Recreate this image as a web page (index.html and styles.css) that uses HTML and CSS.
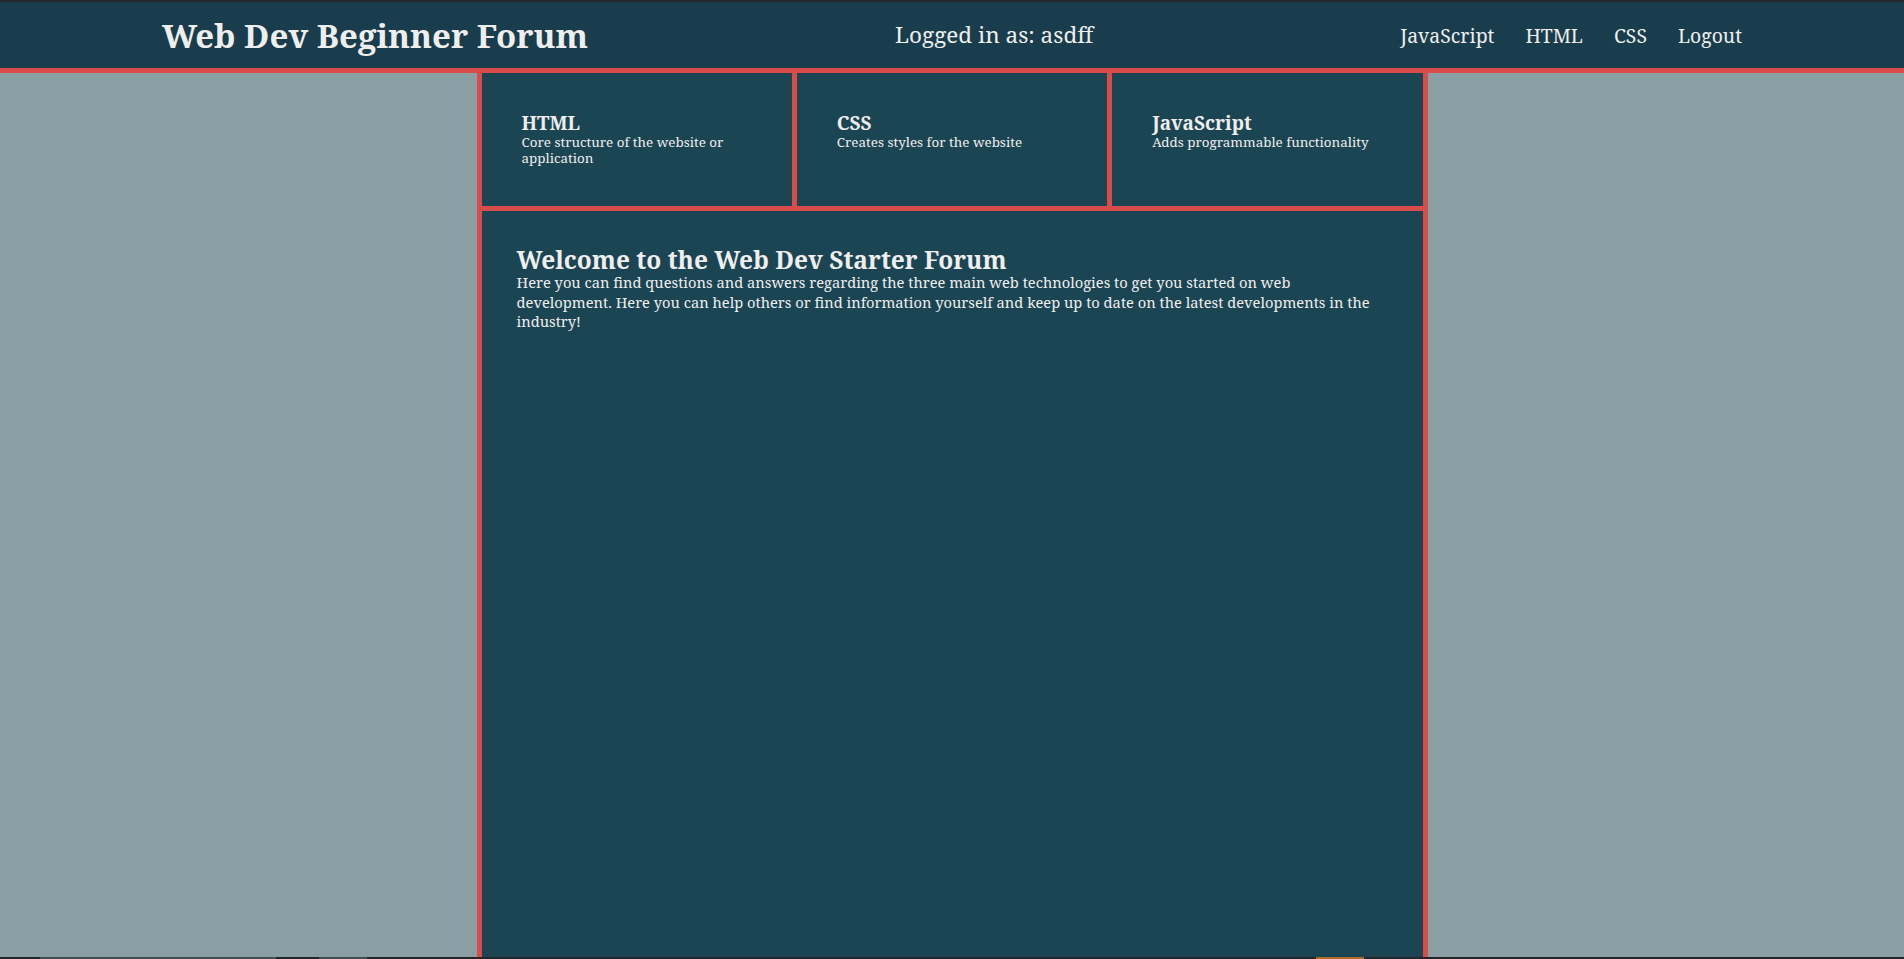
FILE: index.html
```html
<!DOCTYPE html>
<html lang="en">
<head>
<meta charset="utf-8">
<title>Web Dev Beginner Forum</title>
<link rel="stylesheet" href="styles.css">
</head>
<body>
<div class="topline"></div>
<header class="site-header">
  <h1 class="site-title">Web Dev Beginner Forum</h1>
  <div class="user">Logged in as: asdff</div>
  <nav class="nav">
    <a href="#">JavaScript</a>
    <a href="#">HTML</a>
    <a href="#">CSS</a>
    <a href="#">Logout</a>
  </nav>
</header>
<main class="main">
  <section class="cards">
    <div class="card">
      <h3>HTML</h3>
      <p>Core structure of the website or application</p>
    </div>
    <div class="card">
      <h3>CSS</h3>
      <p>Creates styles for the website</p>
    </div>
    <div class="card">
      <h3>JavaScript</h3>
      <p>Adds programmable functionality</p>
    </div>
  </section>
  <section class="intro">
    <h2>Welcome to the Web Dev Starter Forum</h2>
    <p>Here you can find questions and answers regarding the three main web technologies to get you started on web development. Here you can help others or find information yourself and keep up to date on the latest developments in the industry!</p>
  </section>
</main>
<div class="bottomline">
  <span class="seg seg-a"></span>
  <span class="seg seg-b"></span>
  <span class="seg seg-c"></span>
</div>
</body>
</html>
```

FILE: styles.css
```css
* { box-sizing: border-box; }

html, body {
  margin: 0;
  height: 100%;
}

body {
  display: flex;
  flex-direction: column;
  background: #8a9fa3;
  color: #eeeeee;
  font-family: "Noto Serif", "Liberation Serif", serif;
}

.topline {
  height: 2px;
  flex: none;
  background: #24282b;
}

.site-header {
  flex: none;
  height: 71px;
  display: flex;
  align-items: center;
  justify-content: space-between;
  padding: 0 162px;
  background: #193d4c;
  border-bottom: 5px solid #d94c4c;
}

.site-title {
  margin: 0;
  font-size: 33px;
  font-weight: bold;
  line-height: 37px;
  color: #eeeeee;
}

.user {
  font-size: 22.5px;
  line-height: 26px;
}

.nav {
  display: flex;
  gap: 31px;
}

.nav a {
  color: #eeeeee;
  text-decoration: none;
  font-size: 19.4px;
  line-height: 23px;
}

.main {
  flex: 1;
  width: 951px;
  margin: 0 auto;
  display: flex;
  flex-direction: column;
  background: #1c4554;
  border-left: 5px solid #d94c4c;
  border-right: 5px solid #d94c4c;
}

.cards {
  display: grid;
  grid-template-columns: repeat(3, 1fr);
  gap: 5px;
  background: #d94c4c;
  border-bottom: 5px solid #d94c4c;
}

.card {
  height: 133px;
  padding: 40px;
  background: #1c4554;
}

.card h3 {
  margin: 0;
  font-size: 19px;
  line-height: 21.3px;
  font-weight: bold;
}

.card p {
  margin: 0;
  font-size: 13.4px;
  line-height: 16px;
}

.intro {
  padding: 35px 44px 35px 35px;
}

.intro h2 {
  margin: 0;
  font-size: 24.5px;
  line-height: 27.3px;
  font-weight: bold;
}

.intro p {
  margin: 0;
  font-size: 14.7px;
  line-height: 19.2px;
}

.bottomline {
  flex: none;
  height: 2px;
  display: flex;
  background: #232527;
}

.seg { height: 2px; }
.seg-a { width: 236px; margin-left: 40px; background: #4a4d50; }
.seg-b { width: 48px; margin-left: 43px; background: #4a4d50; }
.seg-c { width: 48px; margin-left: 949px; background: #b06a2c; }
```
